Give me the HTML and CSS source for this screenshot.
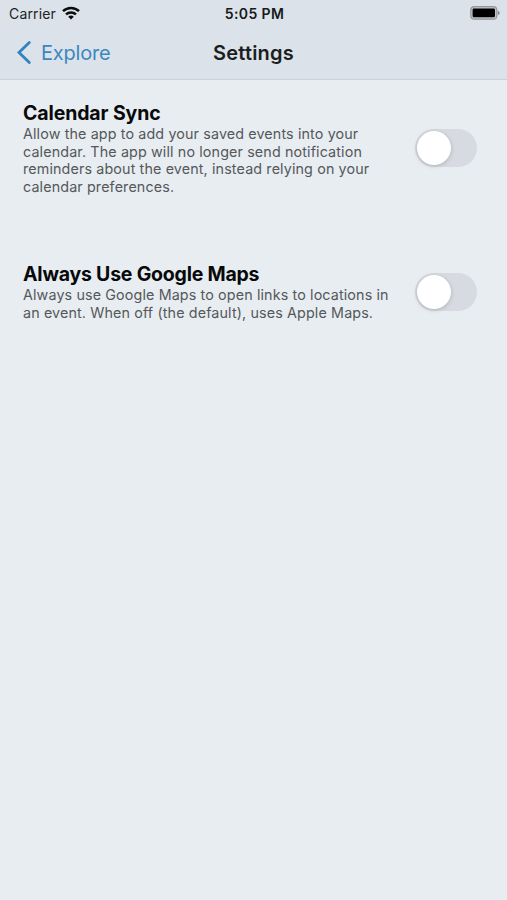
FILE: index.html
```html
<!DOCTYPE html>
<html lang="en">
<head>
<meta charset="utf-8">
<title>Settings</title>
<link rel="stylesheet" href="styles.css">
</head>
<body>
<header class="top">
  <div class="status">
    <div class="carrier"><span class="carrier-name">Carrier</span>
      <svg class="wifi" width="18" height="14" viewBox="0 0 18 14"><g fill="none" stroke="#0b0c0d" stroke-width="2.5"><path d="M1 5.2C5.5.9 12.500.9 17 5.200"/><path d="M4 8.400C6.800 5.800 11.200 5.800 14 8.400"/></g><path d="M9 13.500L6.200 10.700Q9 8.300 11.800 10.700Z" fill="#0b0c0d"/></svg>
    </div>
    <span class="time">5:05 PM</span>
    <svg class="battery" width="30" height="14" viewBox="0 0 30 14"><rect x=".8" y=".7" width="26" height="12.500" rx="3.500" fill="#c1c6c9" stroke="#929799" stroke-width="1.200"/><rect x="2.600" y="2.600" width="22.400" height="8.700" rx="1.400" fill="#000"/><path d="M27.800 4.700Q29.700 5.200 29.700 6.900T27.800 9Z" fill="#858a8f"/></svg>
  </div>
  <nav class="nav">
    <a class="back"><svg class="chevron" width="16" height="26" viewBox="0 0 16 26"><path d="M13.300 2.500L3 12.500L13.300 22.500" fill="none" stroke="#3283be" stroke-width="2.800" stroke-linecap="round" stroke-linejoin="miter"/></svg><span class="back-label">Explore</span></a>
    <h1 class="title">Settings</h1>
  </nav>
</header>
<main>
  <section class="row row-calendar">
    <div class="copy">
      <h2 class="heading heading-calendar">Calendar Sync</h2>
      <p class="desc">Allow the app to add your saved events into your<br>calendar. The app will no longer send notification<br>reminders about the event, instead relying on your<br>calendar preferences.</p>
    </div>
    <div class="switch" role="switch" aria-checked="false"><span class="knob"></span></div>
  </section>
  <section class="row row-maps">
    <div class="copy">
      <h2 class="heading heading-maps">Always Use Google Maps</h2>
      <p class="desc">Always use Google Maps to open links to locations in<br>an event. When off (the default), uses Apple Maps.</p>
    </div>
    <div class="switch" role="switch" aria-checked="false"><span class="knob"></span></div>
  </section>
</main>
</body>
</html>
```

FILE: styles.css
```css
* { box-sizing: border-box; }
body { margin: 0; min-height: 900px; background: #e8edf1; font-family: Inter, "Liberation Sans", sans-serif; color: #08090a; }
h1, h2, p { margin: 0; }
svg { display: block; }
.top { height: 80px; background: #dbe2e9; border-bottom: 1px solid #c9d2da; }
.status { height: 27px; display: grid; grid-template-columns: 1fr auto 1fr; align-items: center; padding: 0 7px 0 9px; }
.carrier { display: flex; align-items: center; gap: 6px; font-size: 14px; letter-spacing: .15px; color: #202427; }
.wifi { margin-top: -1px; }
.time { font-size: 14px; font-weight: 600; letter-spacing: .4px; color: #171a1c; }
.battery { justify-self: end; margin-top: -1px; }
.nav { height: 52px; display: grid; grid-template-columns: 1fr auto 1fr; align-items: center; padding: 0 16px; }
.back { display: flex; align-items: center; gap: 9px; color: #3b88c1; font-size: 20px; letter-spacing: -.2px; }
.back-label { margin-top: -1px; }
.title { font-size: 20px; font-weight: 600; line-height: 24px; letter-spacing: .2px; margin-top: -1px; color: #1a1e21; }
.row { display: flex; justify-content: space-between; padding: 0 30px 0 23px; }
.row-calendar { margin-top: 22px; height: 161px; }
.heading { font-size: 19.500px; line-height: 22px; font-weight: 700; white-space: nowrap; margin-bottom: 1px; }
.heading-calendar { letter-spacing: -.12px; }
.heading-maps { letter-spacing: -.22px; }
.desc { color: #54585b; font-size: 14.300px; line-height: 17.500px; letter-spacing: .135px; white-space: nowrap; }
.switch { width: 62px; height: 38px; border-radius: 19px; background: #d7dbe1; padding: 2px; margin-top: 27px; }
.row-maps .switch { margin-top: 9.500px; }
.knob { display: block; width: 34px; height: 34px; border-radius: 50%; background: #fff; box-shadow: 0 1px 4px rgba(0,0,0,.2); }
```
